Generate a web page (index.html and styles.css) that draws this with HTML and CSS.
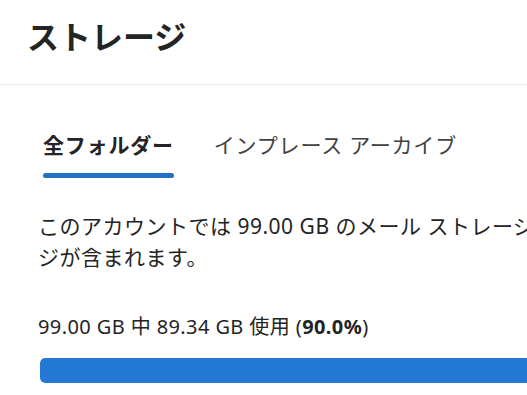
FILE: index.html
```html
<!DOCTYPE html>
<html lang="ja">
<head>
  <meta charset="UTF-8">
  <meta name="viewport" content="width=device-width, initial-scale=1.0">
  <title>ストレージ</title>
  <link rel="stylesheet" href="styles.css">
</head>
<body>
  <div class="page">
    <div class="header">
      <h1>ストレージ</h1>
    </div>

    <div class="content">
      <div class="tabs">
        <div class="tab active">全フォルダー</div>
        <div class="tab">インプレース アーカイブ</div>
      </div>

      <p class="desc">このアカウントでは 99.00 GB のメール ストレージ<br>ジが含まれます。</p>

      <p class="usage">99.00 GB 中 89.34 GB 使用 (<b>90.0%</b>)</p>
      <div class="bar">
        <div class="fill" style="width: 90%"></div>
      </div>
    </div>
  </div>
</body>
</html>
```

FILE: styles.css
```css
* {
  margin: 0;
  padding: 0;
  box-sizing: border-box;
}
html, body {
  overflow: hidden;
}
body {
  background: #fff;
  color: #242424;
  font-family: "Noto Sans", "Noto Sans CJK JP", sans-serif;
}
.page {
  width: 760px;
}
.header {
  height: 85px;
  padding: 15px 27px 0;
  border-bottom: 1px solid #ebebeb;
}
.header h1 {
  font-size: 32px;
  font-weight: bold;
  line-height: 44px;
}
.content {
  padding: 0 0 0 38px;
}
.tabs {
  display: flex;
  gap: 40px;
  padding: 45px 0 0 5px;
}
.tab {
  font-size: 21px;
  line-height: 30px;
  letter-spacing: 0.8px;
  padding-bottom: 15px;
  color: #424242;
  position: relative;
}
.tab.active {
  font-weight: bold;
  color: #242424;
}
.tab.active::after {
  content: "";
  position: absolute;
  left: 0;
  right: 0;
  bottom: -3px;
  height: 5px;
  border-radius: 3px;
  background: #2270c8;
}
.desc {
  margin-top: 36px;
  font-size: 21px;
  line-height: 31px;
  letter-spacing: 0.5px;
  white-space: nowrap;
}
.usage {
  margin-top: 39px;
  font-size: 20px;
  line-height: 30px;
  letter-spacing: 0.4px;
}
.usage b {
  font-weight: bold;
}
.bar {
  margin: 16px 0 0 2px;
  height: 25px;
  background: #e0e0e0;
  border-radius: 5px;
  overflow: hidden;
}
.fill {
  height: 100%;
  background: #2379d4;
  border-radius: 5px;
}
```
